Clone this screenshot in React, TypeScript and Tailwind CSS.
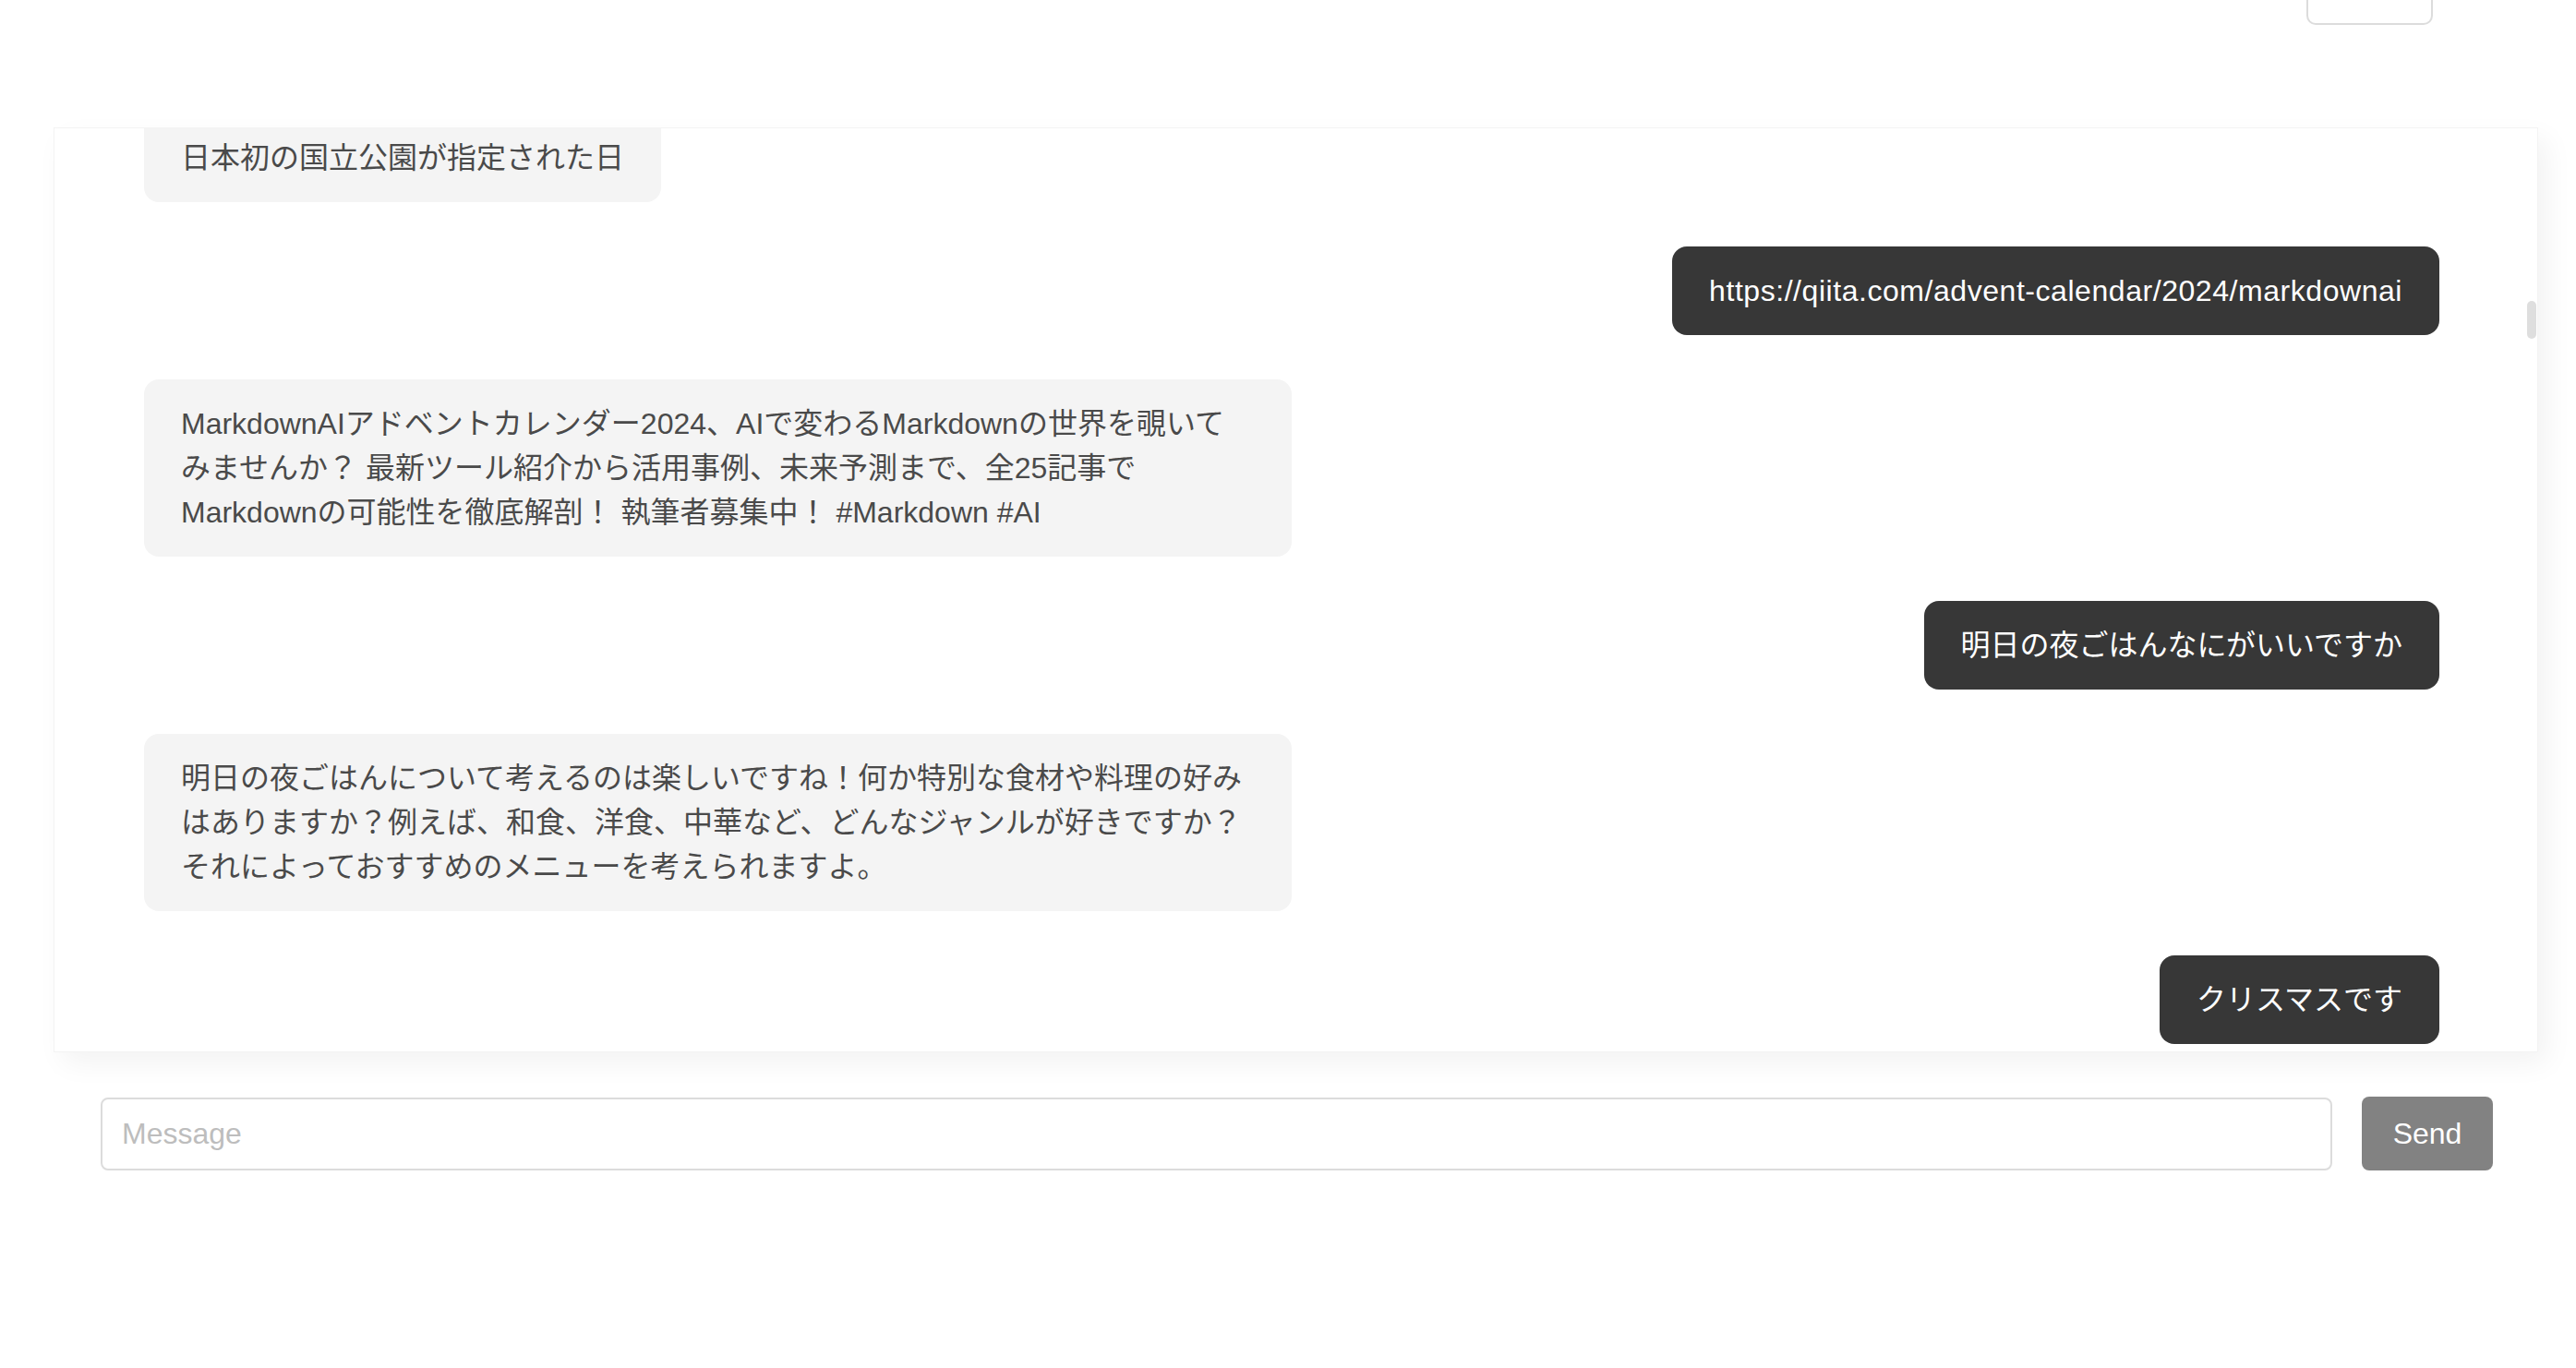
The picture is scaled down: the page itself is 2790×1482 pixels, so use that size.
import React from "react";

type Message = { role: "user" | "assistant"; lines: string[]; url?: boolean };

const messages: Message[] = [
  { role: "assistant", lines: ["日本初の国立公園が指定された日"] },
  { role: "user", lines: ["https://qiita.com/advent-calendar/2024/markdownai"], url: true },
  {
    role: "assistant",
    lines: [
      "MarkdownAIアドベントカレンダー2024、AIで変わるMarkdownの世界を覗いて",
      "みませんか？ 最新ツール紹介から活用事例、未来予測まで、全25記事で",
      "Markdownの可能性を徹底解剖！ 執筆者募集中！ #Markdown #AI",
    ],
  },
  { role: "user", lines: ["明日の夜ごはんなにがいいですか"] },
  {
    role: "assistant",
    lines: [
      "明日の夜ごはんについて考えるのは楽しいですね！何か特別な食材や料理の好み",
      "はありますか？例えば、和食、洋食、中華など、どんなジャンルが好きですか？",
      "それによっておすすめのメニューを考えられますよ。",
    ],
  },
  { role: "user", lines: ["クリスマスです"] },
];

const font = "font-['Liberation_Sans','Noto_Sans_CJK_JP',sans-serif]";

function Bubble({ msg }: { msg: Message }) {
  const isUser = msg.role === "user";
  const multi = msg.lines.length > 1;
  let cls = "rounded-[16px] px-10 py-6 text-[32px] leading-[48px]";
  if (isUser) {
    cls += " bg-[#373737] text-white";
    if (msg.url) cls += " tracking-[0.55px]";
  } else {
    cls += " bg-[#f4f4f4] text-[#4a4a4a]";
    cls += multi ? " w-1/2" : " max-w-[50%]";
  }
  return (
    <div className={isUser ? "flex justify-end" : "flex justify-start"}>
      <div className={cls}>
        {msg.lines.map((line, i) => (
          <div key={i} className="whitespace-nowrap">
            {line}
          </div>
        ))}
      </div>
    </div>
  );
}

export default function App() {
  return (
    <div className={`min-h-[1482px] w-[2790px] bg-white ${font}`}>
      {/* header, scrolled mostly out of view */}
      <div className="flex h-[27px] items-end justify-end overflow-hidden pr-[155px]">
        <button className="h-[80px] w-[137px] shrink-0 rounded-[10px] border-2 border-[#dcdcdc] bg-white" />
      </div>

      {/* chat panel */}
      <div className="relative ml-[58px] mt-[111px] flex h-[1002px] w-[2691px] flex-col justify-end gap-12 overflow-hidden border border-[#f3f3f3] bg-white pb-[8px] pl-[97px] pr-[106px] shadow-[10px_12px_28px_rgba(0,0,0,0.05)]">
        {messages.map((m, i) => (
          <Bubble key={i} msg={m} />
        ))}
        <div className="absolute right-[1px] top-[187px] h-[41px] w-[10px] rounded-full bg-[#dedede]" />
      </div>

      {/* input row */}
      <div className="ml-[109px] mt-[48px] flex w-[2591px] items-center gap-8">
        <input
          placeholder="Message"
          className="h-[79px] flex-1 rounded-[8px] border-2 border-[#dcdcdc] bg-white px-[21px] text-[32px] text-[#333] placeholder:text-[#bdbdbd] outline-none"
        />
        <button className="h-[80px] w-[142px] shrink-0 rounded-[8px] bg-[#828282] text-[32px] text-white">
          Send
        </button>
      </div>
    </div>
  );
}
